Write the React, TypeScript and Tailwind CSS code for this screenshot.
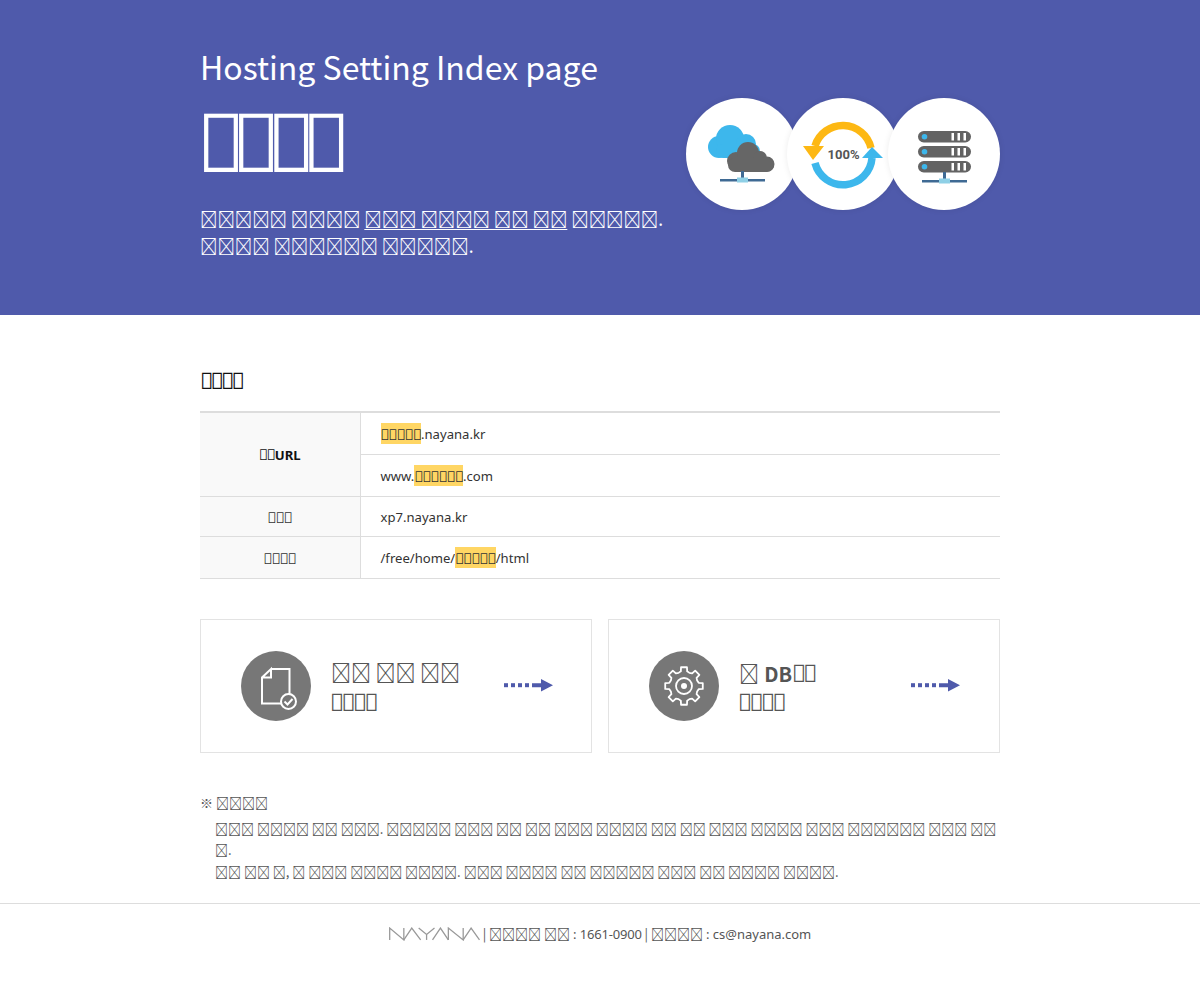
import React from 'react';

// the reference shows every hangul glyph as a missing-glyph box, so private use chars stand in for it
const box = '\uE000';
const tofu = (...words: number[]) => words.map((n) => box.repeat(n)).join(' ');

const gearPath = (() => {
  const pts: string[] = [];
  const teeth = 8;
  for (let i = 0; i < teeth; i++) {
    const a = (i / teeth) * Math.PI * 2;
    const step = (Math.PI * 2) / teeth;
    const add = (r: number, d: number) => {
      pts.push(`${(35 + r * Math.cos(a + d * step)).toFixed(2)} ${(35 + r * Math.sin(a + d * step)).toFixed(2)}`);
    };
    add(14.2, -0.5);
    add(15, -0.27);
    add(19, -0.2);
    add(19, 0.2);
    add(15, 0.27);
  }
  return `M${pts.join('L')}Z`;
})();

const CloudIcon = () => (
  <svg viewBox="0 0 112 112" className="w-[112px] h-[112px]">
    <g fill="#3db7ec">
      <circle cx="33" cy="49" r="11" />
      <circle cx="44" cy="41" r="14" />
      <circle cx="60" cy="46" r="10" />
      <rect x="30" y="46" width="44" height="14" rx="7" />
    </g>
    <g fill="#666666">
      <circle cx="50" cy="63" r="9" />
      <circle cx="62" cy="55" r="11" />
      <circle cx="74" cy="60" r="7" />
      <circle cx="81" cy="66" r="7.5" />
      <rect x="42" y="60" width="46" height="14" rx="7" />
    </g>
    <rect x="55" y="73" width="3" height="9" fill="#3f6a94" />
    <rect x="34" y="81" width="45" height="2.5" fill="#3f6a94" />
    <rect x="51" y="79.5" width="11" height="5" fill="#8fd0e6" />
  </svg>
);

const SyncIcon = () => (
  <svg viewBox="0 0 112 112" className="w-[112px] h-[112px]">
    <path d="M84 50 A29 29 0 0 0 28 48" fill="none" stroke="#fdb813" strokeWidth="7.5" />
    <path d="M16 48 L37 48 L26 62 Z" fill="#fdb813" />
    <path d="M28 65 A29 29 0 0 0 85 60" fill="none" stroke="#3db7ec" strokeWidth="7.5" />
    <path d="M75 60 L96 60 L85 49 Z" fill="#3db7ec" />
    <text x="56.5" y="61" textAnchor="middle" fontSize="13" fontWeight="700" fill="#555555" fontFamily="Roboto, sans-serif">100%</text>
  </svg>
);

const ServerIcon = () => (
  <svg viewBox="0 0 112 112" className="w-[112px] h-[112px]">
    {[33, 48, 63].map((y) => (
      <g key={y}>
        <rect x="30" y={y} width="53" height="11.5" rx="5.75" fill="#636363" />
        <circle cx="36.5" cy={y + 5.75} r="2.8" fill="#3db7ec" />
        <rect x="63.5" y={y + 2} width="2.5" height="7.5" fill="#ffffff" />
        <rect x="69.5" y={y + 2} width="2.5" height="7.5" fill="#ffffff" />
        <rect x="75.5" y={y + 2} width="2.5" height="7.5" fill="#ffffff" />
      </g>
    ))}
    <rect x="55" y="74" width="3" height="9" fill="#3f6a94" />
    <rect x="34" y="82" width="45" height="2.5" fill="#3f6a94" />
    <rect x="51" y="80.5" width="11" height="5" fill="#8fd0e6" />
  </svg>
);

const DocIcon = () => (
  <svg viewBox="0 0 70 70" className="w-[70px] h-[70px]">
    <circle cx="35" cy="35" r="35" fill="#777777" />
    <path d="M30 18 H48.5 V43 M40 52.5 H21 V26.5 L30 18 V26.5 H21" fill="none" stroke="#ffffff" strokeWidth="2" />
    <circle cx="47.5" cy="50.5" r="7.5" fill="#777777" stroke="#ffffff" strokeWidth="2" />
    <path d="M43.5 50.5 L46.5 53.5 L51.5 48" fill="none" stroke="#ffffff" strokeWidth="2" />
  </svg>
);

const GearIcon = () => (
  <svg viewBox="0 0 70 70" className="w-[70px] h-[70px]">
    <circle cx="35" cy="35" r="35" fill="#777777" />
    <path d={gearPath} fill="none" stroke="#ffffff" strokeWidth="1.8" strokeLinejoin="round" />
    <circle cx="35" cy="35" r="8" fill="none" stroke="#ffffff" strokeWidth="1.8" />
    <circle cx="35" cy="35" r="3" fill="#ffffff" />
  </svg>
);

const DotArrow: React.FC<{ className?: string }> = ({ className = '' }) => (
  <svg viewBox="0 0 49 14" className={`w-[49px] h-[14px] shrink-0 -mt-[2px] ${className}`}>
    <g fill="#4f5aab">
      <rect x="0" y="5.2" width="4" height="4" />
      <rect x="7" y="5.2" width="4" height="4" />
      <rect x="14" y="5.2" width="4" height="4" />
      <rect x="21" y="5.2" width="4" height="4" />
      <path d="M28 5.2 H37 V1 L49 7.2 L37 13.5 V9.2 H28 Z" />
    </g>
  </svg>
);

const Logo = () => (
  <svg viewBox="0 0 92 14" aria-label="NAYANA" className="w-[91px] h-[14px] inline-block align-[-2px]">
    <g fill="none" stroke="#999999" strokeWidth="1.3">
      <polyline points="0.7,13 0.7,1 15,13 15,1" />
      <polyline points="15,13 23,1 32,13" />
      <polyline points="30,1 38,7.5 46,1" />
      <line x1="38" y1="7.5" x2="38" y2="13" />
      <polyline points="44,13 52,1 60,13" />
      <polyline points="60,13 60,1 75,13 75,1" />
      <polyline points="75,13 83,1 91.5,13" />
    </g>
  </svg>
);

const Boxes: React.FC<{ n: number }> = ({ n }) => (
  <span className="text-[15px] tracking-[-0.9px]">{box.repeat(n)}</span>
);

const Mark: React.FC<{ n: number }> = ({ n }) => (
  <span className="inline-block h-[21px] leading-[23px] bg-[#ffd664] align-top">
    <Boxes n={n} />
  </span>
);

const Card: React.FC<{ icon: React.ReactNode; title: React.ReactNode; arrowClass?: string }> = ({ icon, title, arrowClass }) => (
  <div className="flex-1 h-[134px] border border-[#e3e3e3] pl-[40px] pr-[39px] flex items-center">
    {icon}
    <div className="ml-[20px] flex-1 text-[#555]">
      <div className="h-[28px] leading-[30px] text-[20px]">{title}</div>
      <div className="h-[28px] leading-[32px] -ml-[1px] text-[24px] tracking-[-2.9px] font-['Noto_Sans',sans-serif]">{tofu(4)}</div>
    </div>
    <DotArrow className={arrowClass} />
  </div>
);

export default function App() {
  const cjk = "font-['Noto_Sans_CJK_KR',sans-serif]";
  return (
    <div className="bg-white font-['Noto_Sans',sans-serif] h-[1000px] overflow-hidden">
      <header className="h-[315px] bg-[#4f5aab] text-white">
        <div className="w-[800px] mx-auto relative pt-[42px]">
          <div className={`${cjk} text-[32px] leading-[48px]`}>Hosting Setting Index page</div>
          <div className="mt-[2px] -ml-[3px] text-[82px] leading-[96px] tracking-[-13.2px] font-bold">{tofu(4)}</div>
          <div className={`${cjk} mt-[17px] text-[17.4px] leading-[27px]`}>
            <div>
              {tofu(5, 4)} <span className="underline underline-offset-[3px]">{tofu(3, 4, 2, 2)}</span> {tofu(5)}.
            </div>
            <div>{tofu(4, 6, 5)}.</div>
          </div>
          <div className="absolute right-0 top-[98px] flex">
            <div className="w-[112px] h-[112px] rounded-full bg-white shadow-[0_0_6px_rgba(0,0,0,0.08)]">
              <CloudIcon />
            </div>
            <div className="w-[112px] h-[112px] rounded-full bg-white -ml-[11px] shadow-[0_0_6px_rgba(0,0,0,0.08)]">
              <SyncIcon />
            </div>
            <div className="w-[112px] h-[112px] rounded-full bg-white -ml-[11px] shadow-[0_0_6px_rgba(0,0,0,0.08)]">
              <ServerIcon />
            </div>
          </div>
        </div>
      </header>

      <main className="w-[800px] mx-auto pt-[50px]">
        <h2 className="text-[23px] leading-[30px] tracking-[-3.3px] font-normal text-[#111]">{tofu(4)}</h2>

        <table className="mt-[16px] w-full border-collapse border-t-2 border-[#ddd] text-[13.1px] text-[#333]">
          <tbody>
            <tr className="border-b border-[#ddd]">
              <th rowSpan={2} className="w-[160px] bg-[#f9f9f9] border-r border-[#ddd] font-bold text-[#111]"><Boxes n={2} />URL</th>
              <td className="px-[20px] pt-[10px] pb-[8px] leading-[23px]"><Mark n={5} />.nayana.kr</td>
            </tr>
            <tr className="border-b border-[#ddd]">
              <td className="px-[20px] pt-[10px] pb-[8px] leading-[23px]">www.<Mark n={6} />.com</td>
            </tr>
            <tr className="border-b border-[#ddd]">
              <th className="pt-[2px] bg-[#f9f9f9] border-r border-[#ddd] font-normal"><Boxes n={3} /></th>
              <td className="px-[20px] pt-[11px] pb-[9px] leading-[19px]">xp7.nayana.kr</td>
            </tr>
            <tr className="border-b border-[#ddd]">
              <th className="pt-[2px] bg-[#f9f9f9] border-r border-[#ddd] font-normal"><Boxes n={4} /></th>
              <td className="px-[20px] pt-[10px] pb-[8px] leading-[23px]">/free/home/<Mark n={5} />/html</td>
            </tr>
          </tbody>
        </table>

        <div className="mt-[40px] flex gap-[16px]">
          <Card icon={<DocIcon />} arrowClass="translate-x-px" title={<span className={cjk}>{tofu(2, 2, 2)}</span>} />
          <Card
            icon={<GearIcon />}
            title={
              <>
                <span className={cjk}>{box}</span> <b className={cjk}>DB</b>
                <span className="font-bold text-[24px] tracking-[-2.9px]">{box.repeat(2)}</span>
              </>
            }
          />
        </div>

        <div className={`mt-[39px] text-[13px] leading-[21.6px] text-[#555] ${cjk}`}>
          <div>※ {tofu(4)}</div>
          <div className="pl-[15px] mt-[4px]">
            <div>{tofu(3, 4, 2, 3)}. {tofu(5, 3, 2, 2, 3, 4, 2, 2, 3, 4, 3, 6, 3, 2)}</div>
            <div>{tofu(1)}.</div>
            <div>{tofu(2, 2, 1)}, {tofu(1, 3, 4, 4)}. {tofu(3, 4, 2, 5, 3, 2, 4, 4)}.</div>
          </div>
        </div>
      </main>

      <footer className="mt-[21px] border-t border-[#ddd] pt-[20px] text-center text-[13px] leading-[20px] text-[#555]">
        <Logo /><span className={cjk}> | {tofu(4, 2)} </span>: <span className="tracking-[-0.2px]">1661-0900</span><span className={cjk}> | {tofu(4)} </span>: cs@nayana.com
      </footer>
    </div>
  );
}
